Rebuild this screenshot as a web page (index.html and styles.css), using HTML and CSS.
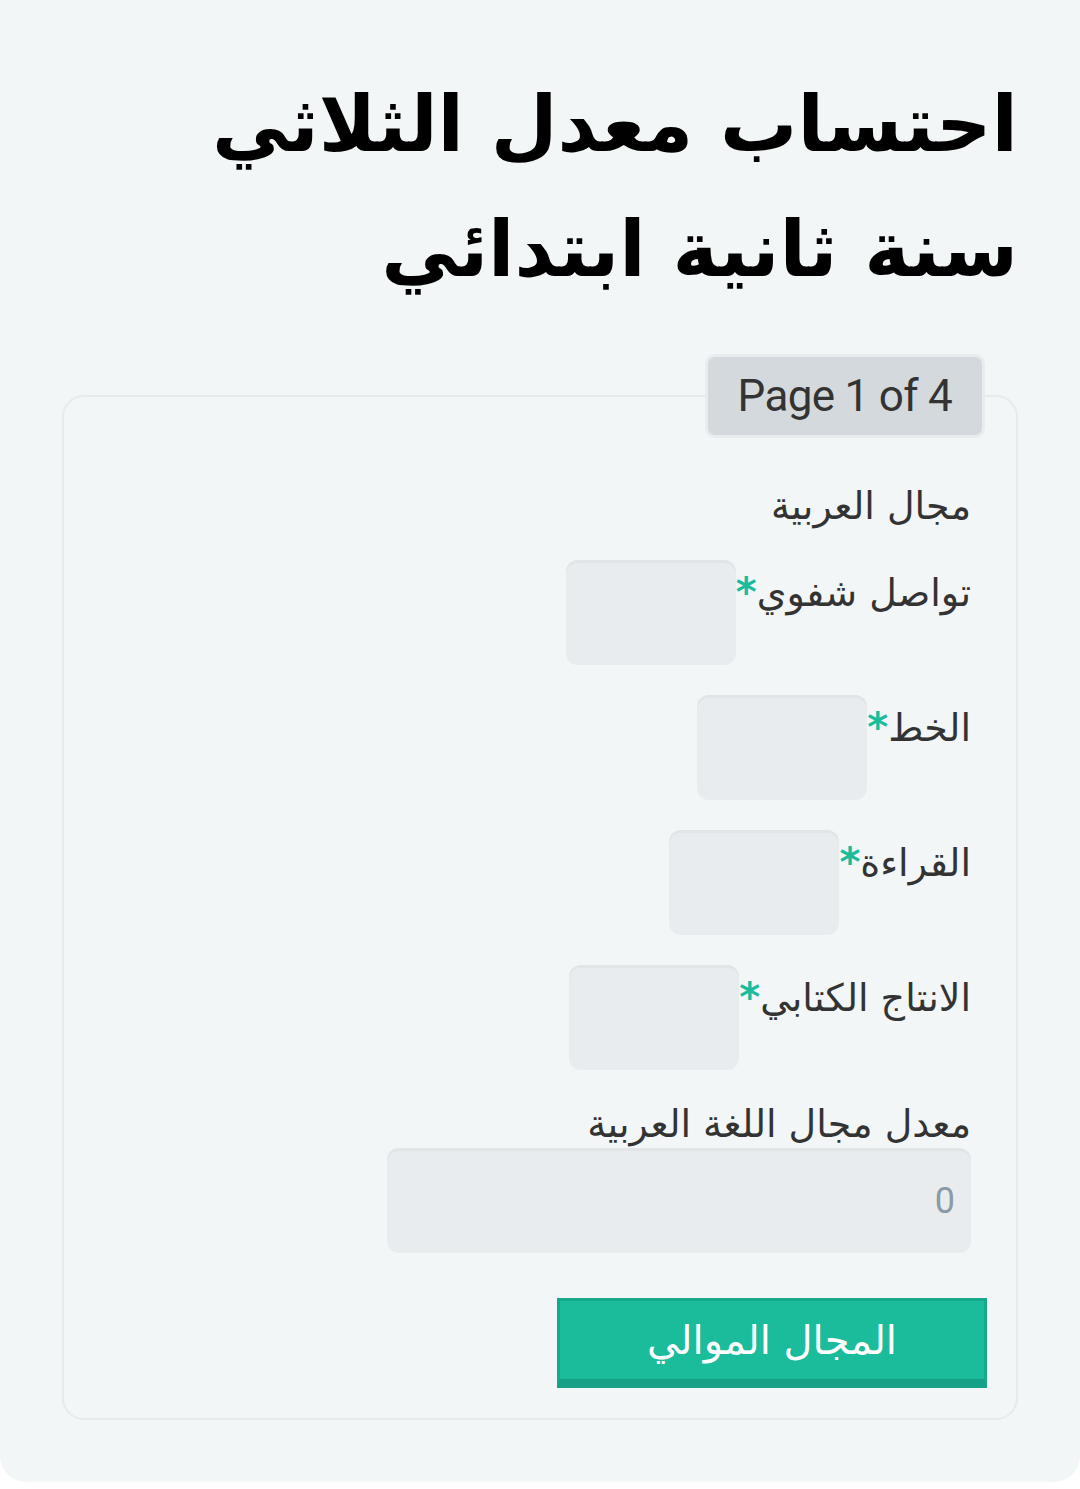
FILE: index.html
```html
<!DOCTYPE html>
<html lang="ar" dir="rtl">
<head>
    <meta charset="UTF-8">
    <meta name="viewport" content="width=device-width, initial-scale=1.0">
    <title>احتساب معدل الثلاثي</title>
    <link rel="stylesheet" href="styles.css">
</head>
<body>
    <div class="page">
        <h1 class="title">احتساب معدل الثلاثي سنة ثانية ابتدائي</h1>

        <fieldset class="form-page">
            <legend class="page-badge">Page 1 of 4</legend>

            <div class="section-name">مجال العربية</div>

            <div class="field">
                <label for="oral">تواصل شفوي<span class="req">*</span></label>
                <input type="text" id="oral" class="grade">
            </div>
            <div class="field">
                <label for="writing">الخط<span class="req">*</span></label>
                <input type="text" id="writing" class="grade">
            </div>
            <div class="field">
                <label for="reading">القراءة<span class="req">*</span></label>
                <input type="text" id="reading" class="grade">
            </div>
            <div class="field">
                <label for="production">الانتاج الكتابي<span class="req">*</span></label>
                <input type="text" id="production" class="grade">
            </div>

            <div class="result">
                <label for="avgArabic">معدل مجال اللغة العربية</label>
                <div><input type="text" id="avgArabic" class="average" value="0" readonly></div>
            </div>

            <button class="next-btn" type="button">المجال الموالي</button>
        </fieldset>
    </div>
</body>
</html>
```

FILE: styles.css
```css
body {
    margin: 0;
    background: #ffffff;
    font-family: "DejaVu Sans", sans-serif;
    color: #333;
}
.page {
    background: #f2f6f7;
    border-radius: 0 0 26px 26px;
    padding: 62px 62px 62px 62px;
    height: 1482px;
    box-sizing: border-box;
}
.title {
    margin: 0 0 42px 0;
    font-size: 77px;
    line-height: 125px;
    font-weight: bold;
    color: #000;
}
.form-page {
    margin: 0;
    border: 2px solid #e6eaec;
    border-radius: 22px;
    padding: 40px 45px 30px 45px;
}
.page-badge {
    font-family: Roboto, sans-serif;
    font-size: 44px;
    letter-spacing: -0.7px;
    color: #333;
    background: #d3d9dd;
    border: 3px solid #e8ecee;
    border-radius: 10px;
    padding: 13px 30px;
    margin-right: -14px;
}
.section-name {
    font-size: 38px;
    line-height: 56px;
    margin-bottom: 26px;
}
.field {
    display: flex;
    align-items: flex-start;
    margin-bottom: 30px;
}
.field label {
    font-size: 38px;
    line-height: 56px;
    padding-top: 4px;
}
.req {
    color: #1abc9c;
    font-weight: bold;
    font-size: 40px;
}
.grade, .average {
    width: 170px;
    height: 105px;
    box-sizing: border-box;
    background: #e8ecef;
    border: none;
    border-radius: 12px;
    box-shadow: inset 0 3px 0 #e1e5e8;
    outline: none;
}
.result label {
    display: block;
    font-size: 38px;
    line-height: 48px;
}
.average {
    position: relative;
    width: 584px;
    font-family: Roboto, sans-serif;
    font-size: 36px;
    color: #8a9aa6;
    padding: 0 16px;
    text-align: right;
}
.next-btn {
    display: block;
    margin: 45px -16px 0 0;
    width: 430px;
    height: 90px;
    background: #1abc9c;
    color: #fff;
    border: 3px solid #17a98b;
    border-bottom: 9px solid #16a085;
    font-family: "DejaVu Sans", sans-serif;
    font-size: 40px;
    cursor: pointer;
}
```
